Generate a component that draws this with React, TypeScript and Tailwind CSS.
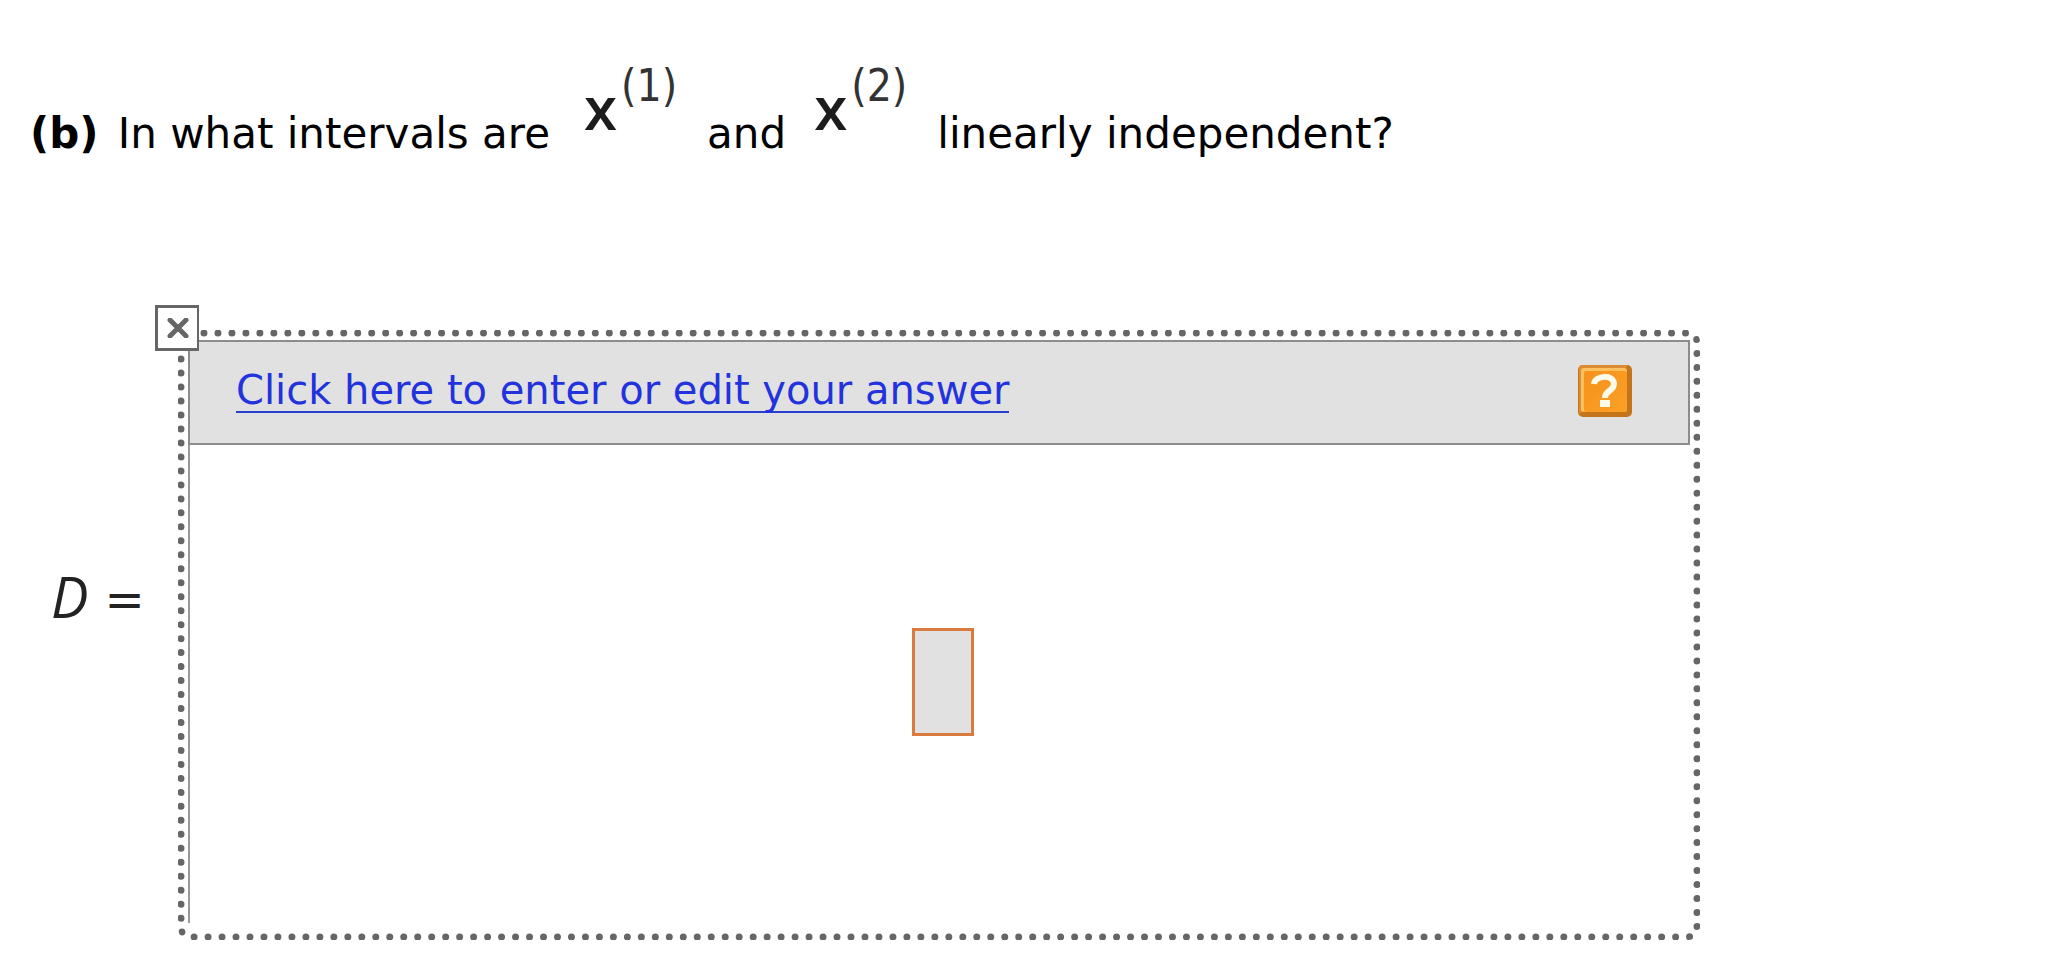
import type { ReactNode } from 'react';

interface TermProps {
  base: string;
  power: ReactNode;
}

const Term = ({ base, power }: TermProps) => (
  <span className="flex items-start text-[#1c1c1c]">
    <b className="mt-[15px] font-['Open_Sans',sans-serif] text-[60px] leading-[60px] font-semibold">{base}</b>
    <sup className="top-0 ml-1 font-['DejaVu_Sans_Condensed','DejaVu_Sans',sans-serif] text-[44px] leading-[48px] text-[#333]">
      {power}
    </sup>
  </span>
);

const Question = () => (
  <p className="flex items-start pl-[30px] text-[42px] leading-[48px] text-black">
    <span className="mt-[48px]">
      <b className="mr-1.5">(b)</b> In what intervals are
    </span>
    <span className="ml-[34px]">
      <Term base="x" power="(1)" />
    </span>
    <span className="mt-[48px] ml-[30px]">and</span>
    <span className="ml-7">
      <Term base="x" power="(2)" />
    </span>
    <span className="mt-[48px] ml-[30px]">linearly independent?</span>
  </p>
);

const HelpButton = () => (
  <button type="button" aria-label="Help" className="h-[54px] w-[56px]">
    <svg viewBox="0 0 56 54" className="block h-full w-full">
      <defs>
        <linearGradient id="helpFace" x1="0" y1="0" x2="1" y2="1">
          <stop offset="0" stopColor="#f6921c" />
          <stop offset="1" stopColor="#fba026" />
        </linearGradient>
      </defs>
      <rect x="1" y="1" width="54" height="52" rx="5" fill="#c4741a" />
      <path d="M5 1H51L48 6H8V46L2 50V5Q2 1 5 1Z" fill="#dd8c34" />
      <rect x="4" y="4" width="46" height="44" rx="3" fill="#ffc060" />
      <rect x="7" y="7" width="43" height="41" rx="2" fill="url(#helpFace)" />
      <path
        d="M17 20C18 11 37 10 37 20C37 27 28 26 28 34"
        fill="none"
        stroke="#fffbea"
        strokeWidth="6"
      />
      <rect x="23" y="36" width="10" height="7" fill="#fffbea" />
    </svg>
  </button>
);

const CloseButton = () => (
  <button
    type="button"
    aria-label="Close"
    className="absolute -top-8 -left-[30px] flex h-[46px] w-[44px] items-center justify-center border-[3px] border-r-2 border-[#666] bg-white"
  >
    <svg viewBox="0 0 22 20" className="h-5 w-[22px]">
      <path d="M3 2L19 18M19 2L3 18" stroke="#666" strokeWidth="5" strokeLinecap="round" />
    </svg>
  </button>
);

const AnswerBox = () => (
  <section className="relative flex h-[610px] flex-1 flex-col rounded-[12px] border-[7px] border-dotted border-[#666] px-[3px] pt-[3px] pb-[10px]">
    <header className="flex h-[105px] items-center justify-between border-2 border-[#8c8c8c] bg-[#e1e1e1] pr-[55px] pb-1 pl-[46px]">
      <a
        href="#answer"
        className="border-b-2 border-[#2a3fd0] text-[40px] leading-[42px] text-[#2233dd]"
      >
        Click here to enter or edit your answer
      </a>
      <HelpButton />
    </header>
    <div id="answer" className="flex flex-1 items-center justify-center border-l-2 border-[#999] pb-1 pl-1.5">
      <input
        aria-label="Answer"
        className="h-[108px] w-[62px] border-[3px] border-[#d97b3f] bg-[#e1e1e1] text-center"
      />
    </div>
    <CloseButton />
  </section>
);

const App = () => (
  <main className="min-h-screen bg-white pt-[62px] pb-4 font-['DejaVu_Sans',sans-serif]">
    <Question />
    <div className="mt-[172px] mr-[346px] flex items-center">
      <div className="flex w-[178px] items-start gap-4 pb-[72px] pl-[51px] text-[#222]">
        <i className="font-['Open_Sans',sans-serif] text-[56px] leading-[64px]">D</i>
        <span className="text-[48px] leading-[70px]">=</span>
      </div>
      <AnswerBox />
    </div>
  </main>
);

export default App;
